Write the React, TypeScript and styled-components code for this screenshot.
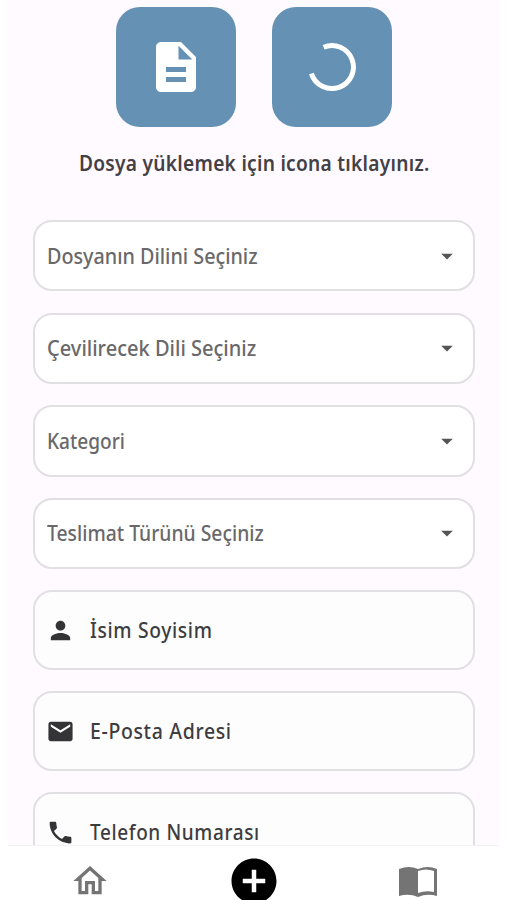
import React from 'react';
import styled, { createGlobalStyle } from 'styled-components';
import { MdDescription, MdArrowDropDown, MdPerson, MdEmail, MdPhone, MdOutlineHome, MdAddCircle } from 'react-icons/md';

const GlobalStyle = createGlobalStyle`
  * { box-sizing: border-box; }
  body { margin: 0; background: #fff; overflow: hidden; }
`;

const Screen = styled.div`
  width: 491px;
  height: 900px;
  margin: 0 8px;
  display: flex;
  flex-direction: column;
  background: #fefaff;
  font-family: 'Noto Sans', 'Open Sans', sans-serif;
  font-weight: 500;
  overflow: hidden;
`;

const Content = styled.main`
  height: 845px;
  flex: none;
  padding: 7px 24px 0 24.5px;
  overflow: hidden;
`;

const UploadRow = styled.div`
  display: flex;
  justify-content: center;
  gap: 36px;
`;

const UploadButton = styled.button`
  display: flex;
  align-items: center;
  justify-content: center;
  width: 120px;
  height: 120px;
  padding: 0;
  border: 0;
  border-radius: 24px;
  background: #6591b4;
  color: #fff;
`;

const Hint = styled.p`
  margin: 22px 0 43px;
  height: 28px;
  line-height: 28px;
  text-align: center;
  white-space: nowrap;
  color: #434145;
  font-size: 21px;
  font-weight: 600;
`;

const Fields = styled.div`
  display: flex;
  flex-direction: column;
  gap: 21.2px;
`;

const Field = styled.div`
  display: flex;
  align-items: center;
  flex: none;
  border: 2px solid #e1dfe2;
  border-radius: 19px;
  white-space: nowrap;
  font-size: 21px;
`;

const SelectField = styled(Field)`
  height: 71.4px;
  justify-content: space-between;
  padding: 0 12px;
  background: #fff;
  color: #69686a;
`;

const InputField = styled(Field)`
  height: 79.8px;
  padding-left: 11.5px;
  gap: 15px;
  background: #fdfdfe;
  color: #3d3c3f;
`;

const Label = styled.span<{ $scale: number; $spacing: number }>`
  display: inline-block;
  line-height: 28px;
  letter-spacing: ${p => p.$spacing}px;
  transform: scaleX(${p => p.$scale});
  transform-origin: left center;
`;

const HintLabel = styled(Label)`
  transform-origin: center;
`;

const BottomBar = styled.nav`
  display: grid;
  grid-template-columns: repeat(3, 1fr);
  flex: none;
  height: 55px;
  border-top: 1px solid #f4f1f5;
  background: #fff;
  color: #747474;
`;

const Tab = styled.div`
  display: flex;
  justify-content: center;
  align-items: flex-start;
  padding-top: 15px;
`;

const AddTab = styled(Tab)`
  padding-top: 8px;
  padding-left: 1px;
  color: #000;
`;

const BookTab = styled(Tab)`
  padding: 20px 0 0 2px;
`;

const Spinner = () => (
  <svg width="60" height="60" viewBox="0 0 60 60" fill="none">
    <path d="M21.6 10.2A21.5 21.5 0 1 1 9.4 36.4" stroke="#fff" strokeWidth="5" />
  </svg>
);

const Book = () => (
  <svg width="40" height="32" viewBox="0 0 40 32">
    <path fill="currentColor" fillRule="evenodd" d="M1 3Q11-1 20 3Q30-1 39 3V30Q29 27 20 31Q11 27 1 30ZM20 5V27Q28 24 36 26V5Q28 2 20 5Z" />
  </svg>
);

const selects = [
  { text: 'Dosyanın Dilini Seçiniz', scale: 0.94, spacing: 0 },
  { text: 'Çevilirecek Dili Seçiniz', scale: 0.954, spacing: 0 },
  { text: 'Kategori', scale: 0.908, spacing: 0 },
  { text: 'Teslimat Türünü Seçiniz', scale: 0.92, spacing: 0 },
];

const inputs = [
  { text: 'İsim Soyisim', Icon: MdPerson, scale: 0.918, spacing: 0.7 },
  { text: 'E-Posta Adresi', Icon: MdEmail, scale: 0.928, spacing: 0.7 },
  { text: 'Telefon Numarası', Icon: MdPhone, scale: 0.903, spacing: 0.7 },
];

export default function App() {
  return (
    <>
      <GlobalStyle />
      <Screen>
        <Content>
          <UploadRow>
            <UploadButton><MdDescription size={60} /></UploadButton>
            <UploadButton><Spinner /></UploadButton>
          </UploadRow>
          <Hint>
            <HintLabel $scale={0.912} $spacing={0.3}>Dosya yüklemek için icona tıklayınız.</HintLabel>
          </Hint>
          <Fields>
            {selects.map(s => (
              <SelectField key={s.text}>
                <Label $scale={s.scale} $spacing={s.spacing}>{s.text}</Label>
                <MdArrowDropDown size={28} color="#555" />
              </SelectField>
            ))}
            {inputs.map(({ text, Icon, scale, spacing }) => (
              <InputField key={text}>
                <Icon size={29} color="#343336" />
                <Label $scale={scale} $spacing={spacing}>{text}</Label>
              </InputField>
            ))}
          </Fields>
        </Content>
        <BottomBar>
          <Tab><MdOutlineHome size={40} /></Tab>
          <AddTab><MdAddCircle size={54} /></AddTab>
          <BookTab><Book /></BookTab>
        </BottomBar>
      </Screen>
    </>
  );
}
